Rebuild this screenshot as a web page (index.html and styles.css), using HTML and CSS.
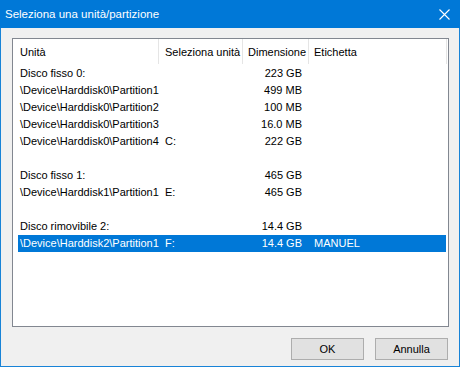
FILE: index.html
```html
<!DOCTYPE html>
<html lang="it">
<head>
    <meta charset="UTF-8">
    <title>Seleziona una unità/partizione</title>
    <link rel="stylesheet" href="styles.css">
</head>
<body>
    <div class="window">
        <div class="titlebar">
            <span class="title">Seleziona una unità/partizione</span>
            <svg class="close" width="11" height="11" viewBox="0 0 11 11">
                <path d="M0.5 0.5 L10.5 10.5 M10.5 0.5 L0.5 10.5" stroke="#fff" stroke-width="1.1" fill="none"/>
            </svg>
        </div>

        <div class="content">
            <!-- elenco delle unità -->
            <div class="listbox">
                <div class="header">
                    <div class="hcell c1">Unità</div>
                    <div class="hcell c2">Seleziona unità</div>
                    <div class="hcell c3">Dimensione</div>
                    <div class="hcell c4">Etichetta</div>
                </div>
                <div class="rows">
                    <div class="row"><span class="c1">Disco fisso 0:</span><span class="c2"></span><span class="c3">223 GB</span><span class="c4"></span></div>
                    <div class="row"><span class="c1">\Device\Harddisk0\Partition1</span><span class="c2"></span><span class="c3">499 MB</span><span class="c4"></span></div>
                    <div class="row"><span class="c1">\Device\Harddisk0\Partition2</span><span class="c2"></span><span class="c3">100 MB</span><span class="c4"></span></div>
                    <div class="row"><span class="c1">\Device\Harddisk0\Partition3</span><span class="c2"></span><span class="c3">16.0 MB</span><span class="c4"></span></div>
                    <div class="row"><span class="c1">\Device\Harddisk0\Partition4</span><span class="c2">C:</span><span class="c3">222 GB</span><span class="c4"></span></div>
                    <div class="row"></div>
                    <div class="row"><span class="c1">Disco fisso 1:</span><span class="c2"></span><span class="c3">465 GB</span><span class="c4"></span></div>
                    <div class="row"><span class="c1">\Device\Harddisk1\Partition1</span><span class="c2">E:</span><span class="c3">465 GB</span><span class="c4"></span></div>
                    <div class="row"></div>
                    <div class="row"><span class="c1">Disco rimovibile 2:</span><span class="c2"></span><span class="c3">14.4 GB</span><span class="c4"></span></div>
                    <div class="row selected"><span class="c1">\Device\Harddisk2\Partition1</span><span class="c2">F:</span><span class="c3">14.4 GB</span><span class="c4">MANUEL</span></div>
                </div>
            </div>

            <div class="buttons">
                <button class="btn">OK</button>
                <button class="btn">Annulla</button>
            </div>
        </div>
    </div>
</body>
</html>
```

FILE: styles.css
```css
body {
    margin: 0;
    padding: 0;
    font-family: "Liberation Sans", Arial, sans-serif;
    font-size: 11px;
    color: #000;
    background-color: #f0f0f0;
}
.window {
    width: 460px;
    height: 367px;
    box-sizing: border-box;
    border: 1px solid #1883d7;
    border-top: none;
    background-color: #f0f0f0;
    display: flex;
    flex-direction: column;
}
.titlebar {
    height: 27px;
    margin: 0 -1px;
    background-color: #0078d7;
    color: white;
    display: flex;
    align-items: center;
    justify-content: space-between;
    padding: 0 10px 1px 5px;
}
.title {
    font-size: 11.5px;
}
.close {
    display: block;
    margin-top: 2px;
}
.content {
    padding: 10px 10px 0 11px;
}
.listbox {
    height: 289px;
    box-sizing: border-box;
    border: 1px solid #828790;
    background-color: white;
}
.header {
    display: grid;
    grid-template-columns: 146px 84px 66px 138px;
    height: 25px;
}
.hcell {
    border-right: 1px solid #e5e5e5;
    display: flex;
    align-items: center;
    padding-top: 1px;
}
.hcell.c1 {
    padding-left: 7px;
}
.hcell.c2 {
    padding-left: 6px;
}
.hcell.c3,
.hcell.c4 {
    padding-left: 5px;
}
.rows {
    padding: 1px 0 0 5px;
}
.row {
    display: grid;
    grid-template-columns: 140px 84px 66px 138px;
    height: 17px;
    line-height: 17px;
    width: 428px;
    white-space: nowrap;
}
.row .c1 {
    padding-left: 2px;
}
.row .c2 {
    padding-left: 7px;
}
.row .c3 {
    text-align: right;
    padding-right: 6px;
}
.row .c4 {
    padding-left: 6px;
}
.row.selected {
    background-color: #0078d7;
    color: white;
}
.buttons {
    display: flex;
    justify-content: flex-end;
    gap: 11px;
    margin-top: 11px;
    padding-right: 1px;
}
.btn {
    width: 73px;
    height: 22px;
    box-sizing: border-box;
    border: 1px solid #adadad;
    background-color: #e1e1e1;
    font-family: "Liberation Sans", Arial, sans-serif;
    font-size: 11px;
    color: #000;
    padding: 0;
}
```
